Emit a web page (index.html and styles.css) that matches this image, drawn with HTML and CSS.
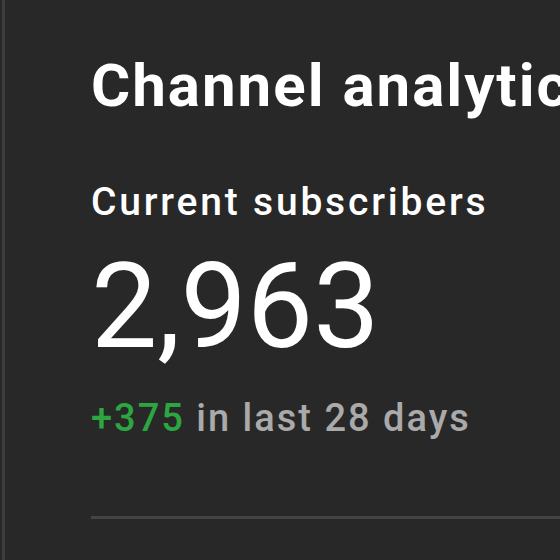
FILE: index.html
```html
<!DOCTYPE html>
<html lang="en">
<head>
    <meta charset="UTF-8">
    <title>Channel analytics</title>
    <link rel="stylesheet" href="styles.css">
</head>
<body>
    <div class="frame">
        <section class="card">
            <h1 class="card-title">Channel analytics</h1>
            <div class="metric-label">Current subscribers</div>
            <div class="metric-value">2,963</div>
            <div class="metric-change"><span class="up">+375</span> in last 28 days</div>
            <hr class="divider">
        </section>
    </div>
</body>
</html>
```

FILE: styles.css
```css
body {
    margin: 0;
    background-color: #282828;
    color: #ffffff;
    font-family: Roboto, "Liberation Sans", sans-serif;
    overflow: hidden;
}
.frame {
    margin-left: 2px;
    border-left: 3px solid #3d3d3d;
    min-height: 560px;
}
.card {
    padding: 48px 0 0 86px;
    white-space: nowrap;
}
.card-title {
    margin: 0;
    font-size: 60px;
    font-weight: 700;
    line-height: 76px;
    letter-spacing: 2px;
}
.metric-label {
    margin-top: 55px;
    font-size: 39px;
    font-weight: 500;
    line-height: 46px;
    letter-spacing: 2.8px;
}
.metric-value {
    margin-top: 22px;
    font-size: 118px;
    line-height: 120px;
}
.metric-change {
    margin-top: 28px;
    font-size: 38px;
    font-weight: 500;
    line-height: 46px;
    letter-spacing: 2px;
    color: #aaaaaa;
}
.up {
    color: #2ba640;
}
.divider {
    margin: 75px 0 0;
    border: none;
    border-top: 3px solid #444444;
}
```
